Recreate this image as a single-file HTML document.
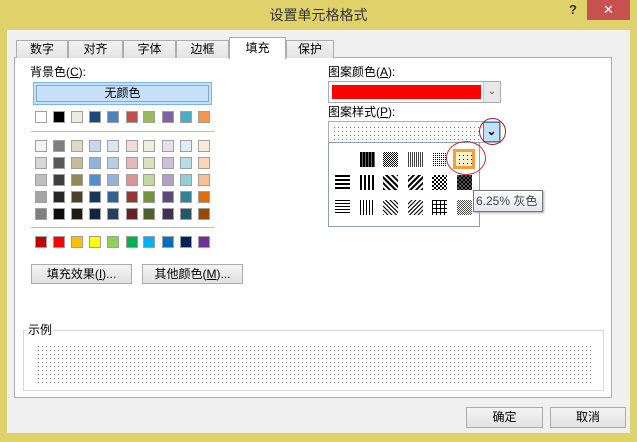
<!DOCTYPE html>
<html><head><meta charset="utf-8"><style>
*{margin:0;padding:0;box-sizing:border-box}
body{width:637px;height:442px;position:relative;overflow:hidden;background:#dfd26b;font-family:"Liberation Sans","Noto Sans CJK SC",sans-serif;font-size:12px;color:#000}
.a{position:absolute}
.t{position:absolute;white-space:nowrap;line-height:14px}
.sw{position:absolute;width:12px;height:12px;border:1px solid #a0a0a0}
.btn{position:absolute;background:linear-gradient(#f4f4f4,#e2e2e2);border:1px solid #acacac;text-align:center;line-height:18px}
.tab{position:absolute;top:40px;height:18px;background:linear-gradient(#f2f2f2,#e4e4e4);border:1px solid #acacac;border-bottom:none;text-align:center;line-height:17px}
.dots{background-color:#fff;background-image:linear-gradient(90deg,#fff 3px,transparent 3px),linear-gradient(#fff 3px,#777 3px);background-size:4px 4px,4px 4px}
.c{position:absolute;width:15px;height:15px}
</style></head><body>
<div class="t" style="left:0;width:637px;top:8px;text-align:center;font-size:14px;color:#333">设置单元格格式</div>
<div class="t" style="left:569px;top:3px;font-weight:bold;font-size:13px;color:#333">?</div>
<div class="a" style="left:587px;top:0;width:43px;height:20px;background:#c75050;color:#fff;text-align:center;line-height:19px;font-size:13px">✕</div>
<div class="a" style="left:7px;top:30px;width:623px;height:403px;background:#f0f0f0"></div>
<div class="a" style="left:14px;top:57px;width:598px;height:341px;background:#fff;border:1px solid #acacac"></div>
<div class="tab" style="left:16px;width:52px">数字</div>
<div class="tab" style="left:68px;width:55px">对齐</div>
<div class="tab" style="left:123px;width:53px">字体</div>
<div class="tab" style="left:176px;width:53px">边框</div>
<div class="tab" style="left:286px;width:48px">保护</div>
<div class="tab" style="left:229px;top:37px;width:57px;height:22px;background:#fff;line-height:21px">填充</div>

<div class="t" style="left:30px;top:65px">背景色(<u>C</u>):</div>
<div class="a" style="left:33px;top:82px;width:179px;height:23px;background:#c5e0f8;border:1px solid #7eb4ea"><div style="margin:2px;height:17px;border:1px solid #8aa6c0;text-align:center;line-height:15px">无颜色</div></div>

<div class="a" style="left:31px;top:131px;width:184px;height:1px;background:#a9c4d8"></div>
<div class="a" style="left:31px;top:227px;width:184px;height:1px;background:#a9c4d8"></div>
<div id="pal"></div>
<div class="btn" style="left:31px;top:264px;width:101px;height:20px">填充效果(<u>I</u>)...</div>
<div class="btn" style="left:142px;top:264px;width:101px;height:20px">其他颜色(<u>M</u>)...</div>

<div class="t" style="left:328px;top:65px">图案颜色(<u>A</u>):</div>
<div class="a" style="left:328px;top:81px;width:173px;height:22px;border:1px solid #acacac;background:#fff"></div>
<div class="a" style="left:332px;top:85px;width:149px;height:14px;background:#f00"></div>
<div class="a" style="left:483px;top:82px;width:17px;height:20px;background:#e8e8e8;border-left:1px solid #ccc;text-align:center;line-height:20px;font-size:10px;color:#555">⌄</div>
<div class="t" style="left:328px;top:105px">图案样式(<u>P</u>):</div>
<div class="a" style="left:328px;top:121px;width:173px;height:22px;border:1px solid #acacac;background:#fff"></div>
<div class="a dots" style="left:331px;top:124px;width:150px;height:16px"></div>
<div class="a" style="left:483px;top:122px;width:17px;height:20px;background:#c4e0f8;border:1px solid #3c7fb1;text-align:center;line-height:16px;font-size:12px;font-weight:bold;color:#000">⌄</div>
<div class="a" style="left:479px;top:118px;width:27px;height:27px;border:1px solid #a02030;border-radius:50%"></div>

<div class="a" style="left:328px;top:142px;width:152px;height:85px;background:#fff;border:1px solid #8ca0b4"></div>
<div class="c" style="left:360px;top:152px;background:repeating-linear-gradient(90deg,#000 0 2px,#666 2px 3px)"></div>
<div class="c" style="left:383px;top:152px;background:repeating-conic-gradient(#000 0 25%,#fff 0 50%) 0 0/2px 2px"></div>
<div class="c" style="left:408px;top:152px;background:repeating-linear-gradient(90deg,#000 0 1px,#fff 1px 2px);opacity:.75"></div>
<div class="c dots" style="left:432px;top:152px;background-size:2px 2px,2px 2px;background-image:linear-gradient(90deg,#fff 1px,transparent 1px),linear-gradient(#fff 1px,#000 1px)"></div>
<div class="a" style="left:453px;top:149px;width:22px;height:20px;border:3px solid #f0a040;background:#fdf1c8"></div>
<div class="c" style="left:456px;top:152px;background-color:#fdf1c8;background-image:linear-gradient(90deg,#fdf1c8 3px,transparent 3px),linear-gradient(#fdf1c8 3px,#000 3px);background-size:4px 4px;width:16px;height:14px"></div>
<div class="a" style="left:446px;top:141px;width:40px;height:34px;border:1px solid #c03040;border-radius:50%"></div>
<div class="c" style="left:335px;top:175px;background:repeating-linear-gradient(#000 0 2px,#fff 2px 4px)"></div>
<div class="c" style="left:360px;top:175px;background:repeating-linear-gradient(90deg,#000 0 2px,#fff 2px 4px)"></div>
<div class="c" style="left:383px;top:175px;background:repeating-linear-gradient(45deg,#000 0 2px,#fff 2px 4px)"></div>
<div class="c" style="left:408px;top:175px;background:repeating-linear-gradient(-45deg,#000 0 2px,#fff 2px 4px)"></div>
<div class="c" style="left:432px;top:175px;background:repeating-conic-gradient(#000 0 25%,#fff 0 50%) 0 0/4px 4px"></div>
<div class="c" style="left:457px;top:175px;background:repeating-conic-gradient(#000 0 25%,#555 0 50%) 0 0/4px 4px"></div>
<div class="c" style="left:335px;top:200px;background:repeating-linear-gradient(#000 0 1px,#fff 1px 3px)"></div>
<div class="c" style="left:360px;top:200px;background:repeating-linear-gradient(90deg,#000 0 1px,#fff 1px 3px)"></div>
<div class="c" style="left:383px;top:200px;background:repeating-linear-gradient(45deg,#000 0 1px,#fff 1px 3px)"></div>
<div class="c" style="left:408px;top:200px;background:repeating-linear-gradient(-45deg,#000 0 1px,#fff 1px 3px)"></div>
<div class="c" style="left:432px;top:200px;background:repeating-linear-gradient(#000 0 1px,transparent 1px 4px),repeating-linear-gradient(90deg,#000 0 1px,#fff 1px 4px)"></div>
<div class="c" style="left:457px;top:200px;background:repeating-conic-gradient(#000 0 25%,#fff 0 50%) 0 0/2px 2px;opacity:.7"></div>
<div class="a" style="left:473px;top:190px;width:70px;height:22px;background:linear-gradient(#fff,#e4e5f0);border:1px solid #767676;box-shadow:1px 1px 2px #aaa;color:#444;line-height:20px;padding-left:2px;white-space:nowrap">6.25% 灰色</div>

<div class="a" style="left:23px;top:330px;width:581px;height:61px;border:1px solid #d8d8d8"></div>
<div class="t" style="left:27px;top:323px;background:#fff;padding:0 1px">示例</div>
<div class="a dots" style="left:35px;top:343px;width:559px;height:40px"></div>

<div class="btn" style="left:466px;top:407px;width:77px;height:21px">确定</div>
<div class="btn" style="left:550px;top:407px;width:76px;height:21px">取消</div>

<script>
var xs=[35,53,71,89,107,126,143,162,180,198];
var top1=['#fff','#000','#eeece1','#1f497d','#4f81bd','#c0504d','#9bbb59','#8064a2','#4bacc6','#f79646'];
var g=[['#f2f2f2','#7f7f7f','#ddd9c3','#c6d9f0','#dbe5f1','#f2dcdb','#ebf1dd','#e5e0ec','#dbeef3','#fdeada'],
['#d8d8d8','#595959','#c4bd97','#8db3e2','#b8cce4','#e5b9b7','#d7e3bc','#ccc1d9','#b7dde8','#fbd5b5'],
['#bfbfbf','#3f3f3f','#938953','#548dd4','#95b3d7','#d99694','#c3d69b','#b2a2c7','#92cddc','#fac08f'],
['#a5a5a5','#262626','#494429','#17365d','#366092','#953734','#76923c','#5f497a','#31859b','#e36c09'],
['#7f7f7f','#0c0c0c','#1d1b10','#0f243e','#244061','#632423','#4f6128','#3f3151','#205867','#974806']];
var std=['#c00000','#f00','#ffc000','#ff0','#92d050','#00b050','#00b0f0','#0070c0','#002060','#7030a0'];
var h='';
function row(c,y){c.forEach(function(col,i){h+='<div class="sw" style="left:'+xs[i]+'px;top:'+y+'px;background:'+col+'"></div>';});}
row(top1,111);
g.forEach(function(r,j){row(r,140+j*17);});
row(std,236);
document.getElementById('pal').innerHTML=h;
</script>
</body></html>
